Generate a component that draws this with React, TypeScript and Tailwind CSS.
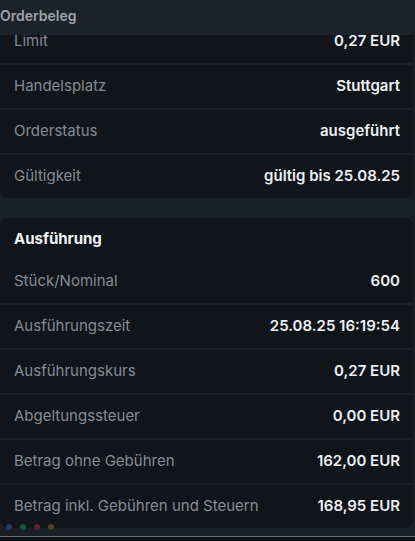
import React from 'react';

type Row = { label: string; value: string };

const orderRows: Row[] = [
  { label: 'Limit', value: '0,27 EUR' },
  { label: 'Handelsplatz', value: 'Stuttgart' },
  { label: 'Orderstatus', value: 'ausgeführt' },
  { label: 'Gültigkeit', value: 'gültig bis 25.08.25' },
];

const execRows: Row[] = [
  { label: 'Stück/Nominal', value: '600' },
  { label: 'Ausführungszeit', value: '25.08.25 16:19:54' },
  { label: 'Ausführungskurs', value: '0,27 EUR' },
  { label: 'Abgeltungssteuer', value: '0,00 EUR' },
  { label: 'Betrag ohne Gebühren', value: '162,00 EUR' },
  { label: 'Betrag inkl. Gebühren und Steuern', value: '168,95 EUR' },
];

const DetailRow: React.FC<Row> = ({ label, value }) => (
  <div className="box-content flex h-[43px] items-center justify-between pl-[14px] pr-[13px]">
    <span className="text-[15px] text-[#868b93]">{label}</span>
    <span className="text-[15px] font-semibold text-[#eef0f2]">{value}</span>
  </div>
);

export default function App() {
  return (
    <div
      className="relative h-[541px] w-[415px] overflow-hidden bg-[#1a1f26]"
      style={{ fontFamily: 'Inter, "Noto Sans", sans-serif' }}
    >
      {/* sticky header over the scrolled list */}
      <div className="absolute left-0 right-0 top-0 z-10 flex h-[35px] items-start bg-[#1c2229] pt-[5px]">
        <span className="text-[14px] font-semibold text-[#9ea3aa]">Orderbeleg</span>
      </div>

      <div className="flex flex-col gap-[20px] pr-[2px] pt-[20px]">
        <div className="flex flex-col divide-y-2 divide-[#1a1f26] rounded-lg bg-[#11141b]">
          {orderRows.map((r) => (
            <DetailRow key={r.label} {...r} />
          ))}
        </div>

        <div className="flex flex-col rounded-lg bg-[#11141b]">
          <div className="flex h-[42px] items-center pl-[14px]">
            <span className="text-[15px] font-bold text-[#f3f4f6]">Ausführung</span>
          </div>
          <div className="flex flex-col divide-y-2 divide-[#1a1f26]">
            {execRows.map((r) => (
              <DetailRow key={r.label} {...r} />
            ))}
          </div>
        </div>
      </div>

      <div className="absolute bottom-[11px] left-[6px] flex gap-[8px]">
        <span className="h-[6px] w-[6px] rounded-full bg-[#1f3b68]" />
        <span className="h-[6px] w-[6px] rounded-full bg-[#11573a]" />
        <span className="h-[6px] w-[6px] rounded-full bg-[#58242f]" />
        <span className="h-[6px] w-[6px] rounded-full bg-[#4f4527]" />
      </div>

      <div className="absolute bottom-0 left-0 right-0 h-[5px] border-t border-[#6b7078] bg-[#0e1014]" />
    </div>
  );
}
